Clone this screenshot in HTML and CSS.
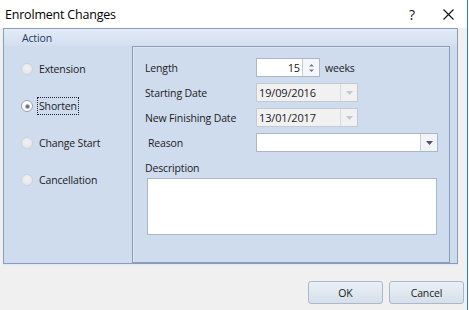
FILE: index.html
```html
<!DOCTYPE html>
<html>
<head>
    <title>Enrolment Changes</title>
    <link rel="stylesheet" href="styles.css">
</head>
<body>
    <div class="window">
        <div class="titlebar">
            <span class="title">Enrolment Changes</span>
            <span class="help">?</span>
            <span class="close">
                <svg width="11" height="11" viewBox="0 0 11 11"><path d="M0.5 0.5L10.5 10.5M10.5 0.5L0.5 10.5" stroke="#111" stroke-width="1.1"/></svg>
            </span>
        </div>

        <div class="content">
            <div class="group">
                <div class="group-header">Action</div>
                <div class="group-body">
                    <div class="options">
                        <label class="option"><span class="radio"></span><span class="option-text">Extension</span></label>
                        <label class="option"><span class="radio checked"></span><span class="option-text focused">Shorten</span></label>
                        <label class="option"><span class="radio"></span><span class="option-text">Change Start</span></label>
                        <label class="option"><span class="radio"></span><span class="option-text">Cancellation</span></label>
                    </div>

                    <div class="details">
                        <div class="fields">
                            <span class="field-label">Length</span>
                            <div class="length">
                                <div class="spinner">
                                    <span class="spinner-value">15</span>
                                    <span class="spin-buttons">
                                        <svg width="7" height="12" viewBox="0 0 7 12"><path d="M1 4.5L3.5 2L6 4.5Z M1 7.5L3.5 10L6 7.5Z" fill="#6f7c8c"/></svg>
                                    </span>
                                </div>
                                <span class="unit">weeks</span>
                            </div>

                            <span class="field-label">Starting Date</span>
                            <div class="combo combo-date disabled">
                                <span class="combo-value">19/09/2016</span>
                                <span class="combo-button"><svg width="7" height="4" viewBox="0 0 7 4"><path d="M0 0H7L3.5 4Z" fill="#c2c8d0"/></svg></span>
                            </div>

                            <span class="field-label">New Finishing Date</span>
                            <div class="combo combo-date disabled">
                                <span class="combo-value">13/01/2017</span>
                                <span class="combo-button"><svg width="7" height="4" viewBox="0 0 7 4"><path d="M0 0H7L3.5 4Z" fill="#c2c8d0"/></svg></span>
                            </div>

                            <span class="field-label indent">Reason</span>
                            <div class="combo combo-reason">
                                <span class="combo-value"></span>
                                <span class="combo-button"><svg width="7" height="4" viewBox="0 0 7 4"><path d="M0 0H7L3.5 4Z" fill="#4a5563"/></svg></span>
                            </div>
                        </div>

                        <div class="description-label">Description</div>
                        <div class="description"></div>
                    </div>
                </div>
            </div>

            <div class="buttons">
                <button type="button" class="btn">OK</button>
                <button type="button" class="btn">Cancel</button>
            </div>
        </div>
    </div>
</body>
</html>
```

FILE: styles.css
```css
body {
    margin: 0;
    padding: 0;
    background-color: #ffffff;
    font-family: "Open Sans", "Noto Sans", sans-serif;
    font-size: 10.5px;
    letter-spacing: -0.15px;
    color: #1b1b1b;
}

.window {
    width: 467px;
    height: 310px;
    border-right: 1px solid #1a83d6;
    display: flex;
    flex-direction: column;
}

.titlebar {
    height: 28px;
    background-color: #fff;
    display: flex;
    align-items: center;
}

.title {
    font-size: 12.5px;
    letter-spacing: -0.2px;
    padding-left: 5px;
    flex: 1;
    color: #000;
}

.help {
    font-size: 14px;
    width: 20px;
    margin-right: 14px;
    color: #111;
}

.close {
    display: flex;
    margin-right: 13px;
    padding-top: 1px;
}

.content {
    flex: 1;
    background-color: #f0f0f0;
    padding-left: 3px;
}

.group {
    width: 455px;
    height: 236px;
    box-sizing: border-box;
    border: 1px solid #8b9db6;
    background-color: #cfdcee;
    box-shadow: 0 1px 0 #e2e9f3, 0 2px 0 #e9eef5;
}

.group-header {
    height: 17px;
    line-height: 18px;
    padding-left: 18px;
    color: #1f3a5c;
    background: linear-gradient(#e2ebf7, #d3dff0);
}

.group-body {
    display: flex;
    height: 217px;
}

.options {
    width: 128px;
    display: flex;
    flex-direction: column;
    gap: 17px;
    padding: 13px 0 0 17px;
    box-sizing: border-box;
}

.option {
    display: flex;
    align-items: center;
    height: 20px;
}

.radio {
    width: 12px;
    height: 12px;
    box-sizing: border-box;
    border-radius: 50%;
    border: 1px solid #cdd2d9;
    background: radial-gradient(circle at 50% 40%, #f1f2f4, #dfe2e6);
    margin-right: 5px;
    display: flex;
    align-items: center;
    justify-content: center;
}

.radio.checked {
    background: #fdfdfd;
    border-color: #99a2ad;
}

.radio.checked::after {
    content: "";
    width: 3px;
    height: 3px;
    border-radius: 50%;
    background-color: #5d6b7c;
    box-shadow: 0 0 0 1px #aab6c4;
}

.option-text {
    padding: 1px 1px;
}

.option-text.focused {
    outline: 1px dotted #222;
    outline-offset: 0;
}

.details {
    width: 318px;
    box-sizing: border-box;
    border: 1px solid #8b9db6;
    box-shadow: inset 1px 1px 0 #dde6f2;
    padding: 11px 0 0 12px;
}

.fields {
    display: grid;
    grid-template-columns: 111px auto;
    row-gap: 6px;
    align-items: center;
}

.field-label {
    line-height: 17px;
    padding-top: 2px;
}

.field-label.indent {
    padding-left: 3px;
}

.length {
    display: flex;
    align-items: center;
}

.spinner {
    width: 64px;
    height: 19px;
    box-sizing: border-box;
    border: 1px solid #a9b7c9;
    background-color: #fff;
    display: flex;
}

.spinner-value {
    flex: 1;
    text-align: right;
    line-height: 17px;
    padding-right: 2px;
    font-size: 11px;
}

.spin-buttons {
    width: 16px;
    border-left: 1px solid #c5cfdb;
    background-color: #f4f6f9;
    display: flex;
    align-items: center;
    justify-content: center;
}

.unit {
    margin-left: 5px;
    padding-top: 1px;
}

.combo {
    height: 19px;
    box-sizing: border-box;
    border: 1px solid #a9b7c9;
    background-color: #fff;
    display: flex;
}

.combo.disabled {
    border-color: #c3cad4;
    background-color: #f1f1f1;
}

.combo-date {
    width: 102px;
}

.combo-reason {
    width: 182px;
}

.combo-value {
    flex: 1;
    line-height: 17px;
    padding-left: 2px;
    font-size: 11px;
}

.combo-button {
    width: 16px;
    border-left: 1px solid #c5cfdb;
    background-color: #f2f4f7;
    display: flex;
    align-items: center;
    justify-content: center;
}

.disabled .combo-button {
    border-left-color: #d6dbe2;
    background-color: #f1f1f1;
}

.description-label {
    margin-top: 8px;
    line-height: 17px;
}

.description {
    width: 290px;
    height: 57px;
    box-sizing: border-box;
    margin: 1px 0 0 2px;
    border: 1px solid #a9b7c9;
    background-color: #fff;
}

.buttons {
    display: flex;
    justify-content: flex-end;
    gap: 6px;
    margin-top: 17px;
    padding-right: 3px;
}

.btn {
    width: 75px;
    height: 23px;
    font-family: inherit;
    font-size: 10.5px;
    letter-spacing: -0.15px;
    color: #1b1b1b;
    border: 1px solid #a9b8ca;
    border-radius: 3px;
    background: linear-gradient(#eaf0f6, #d6dfea);
    padding: 0;
}
```
